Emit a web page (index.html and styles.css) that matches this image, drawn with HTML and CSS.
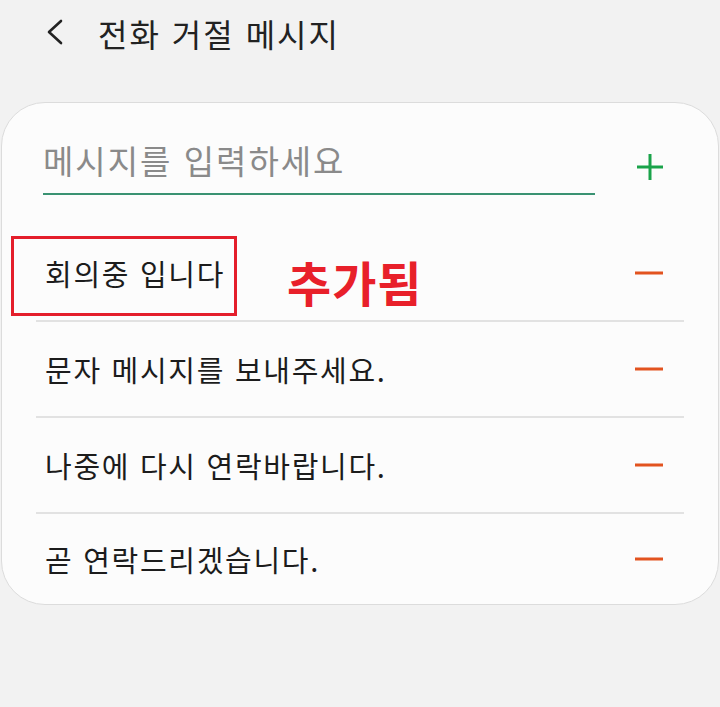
FILE: index.html
```html
<!DOCTYPE html>
<html lang="ko">
<head>
<meta charset="utf-8">
<link rel="stylesheet" href="styles.css">
</head>
<body>
<header class="header">
  <svg class="back" width="20" height="28" viewBox="0 0 20 28"><path d="M16 3 L4 14 L16 25" fill="none" stroke="#222" stroke-width="2.6" stroke-linecap="round" stroke-linejoin="round"/></svg>
  <h1 class="title">전화 거절 메시지</h1>
</header>
<main class="card">
  <div class="input-row">
    <div class="field"><span class="placeholder">메시지를 입력하세요</span></div>
    <svg class="icon" width="30" height="30" viewBox="0 0 30 30"><path d="M15 2 V28 M2 15 H28" stroke="#1aa34a" stroke-width="3"/></svg>
  </div>
  <ul class="list">
    <li class="row"><span class="text">회의중 입니다</span><svg class="icon" width="30" height="30" viewBox="0 0 30 30"><path d="M1 15 H29" stroke="#e2531f" stroke-width="3"/></svg></li>
    <li class="row"><span class="text">문자 메시지를 보내주세요.</span><svg class="icon" width="30" height="30" viewBox="0 0 30 30"><path d="M1 15 H29" stroke="#e2531f" stroke-width="3"/></svg></li>
    <li class="row"><span class="text">나중에 다시 연락바랍니다.</span><svg class="icon" width="30" height="30" viewBox="0 0 30 30"><path d="M1 15 H29" stroke="#e2531f" stroke-width="3"/></svg></li>
    <li class="row last"><span class="text">곧 연락드리겠습니다.</span><svg class="icon" width="30" height="30" viewBox="0 0 30 30"><path d="M1 15 H29" stroke="#e2531f" stroke-width="3"/></svg></li>
  </ul>
  <div class="highlight"></div>
  <div class="added">추가됨</div>
</main>
</body>
</html>
```
FILE: styles.css
```css
html, body {
  margin: 0;
  padding: 0;
  background: #f2f2f2;
  font-family: "Noto Sans CJK KR", "Noto Sans", sans-serif;
  color: #1c1c1c;
}
.header {
  height: 66px;
  display: flex;
  align-items: center;
  padding-left: 45px;
}
.back {
  display: block;
  margin-top: -2px;
}
.title {
  margin: 0 0 0 33px;
  font-size: 32px;
  font-weight: 400;
  line-height: 40px;
  letter-spacing: 2px;
  color: #222;
}
.card {
  position: relative;
  margin: 36px 1px 0 1px;
  background: #fcfcfc;
  border: 1px solid #dcdcdc;
  border-radius: 44px;
  padding-top: 37px;
}
.input-row {
  display: flex;
  align-items: center;
  padding-left: 41px;
}
.field {
  width: 552px;
  border-bottom: 2px solid #3a9272;
  padding-bottom: 13px;
}
.placeholder {
  display: block;
  font-size: 33px;
  line-height: 40px;
  letter-spacing: 2px;
  color: #8a8a8a;
}
.input-row .icon {
  margin-left: 40px;
  margin-top: -2px;
}
.list {
  list-style: none;
  margin: 31px 34px 0 34px;
  padding: 0;
}
.row {
  height: 94px;
  border-bottom: 2px solid #e2e2e2;
  display: flex;
  align-items: center;
  justify-content: space-between;
  padding: 0 20px 0 9px;
}
.row.last {
  border-bottom: none;
  height: 90px;
}
.text {
  font-size: 29px;
  line-height: 36px;
  letter-spacing: 1.7px;
}
.icon {
  display: block;
}
.highlight {
  position: absolute;
  left: 9px;
  top: 133px;
  width: 220px;
  height: 74px;
  border: 3px solid #e41e2b;
}
.added {
  position: absolute;
  left: 285px;
  top: 148px;
  font-size: 48px;
  font-weight: 700;
  line-height: 60px;
  letter-spacing: 1px;
  color: #e8202a;
}
```
